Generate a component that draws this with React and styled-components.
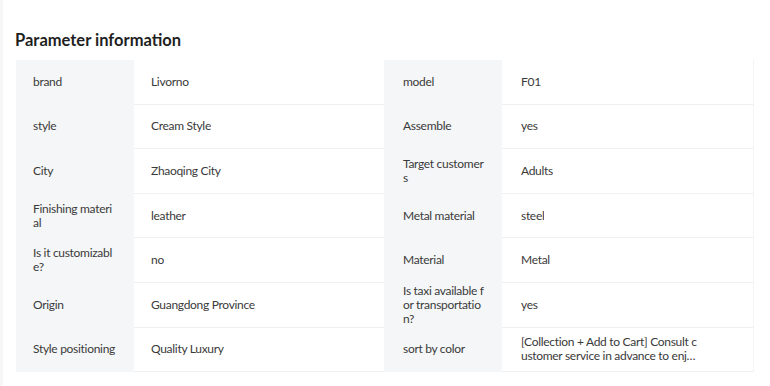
import styled, { createGlobalStyle } from "styled-components";

const Global = createGlobalStyle`
  html, body {
    margin: 0;
    padding: 0;
    background: #fff;
  }
  body {
    font-family: "Lato", "Noto Sans", sans-serif;
    color: #333;
  }
`;

const Page = styled.div`
  width: 770px;
  height: 386px;
  box-sizing: border-box;
  border-left: 3px solid #f7f7f8;
  padding: 29px 0 0 12px;
`;

const Title = styled.h3`
  margin: 0 0 9px;
  font-size: 16.5px;
  font-weight: 700;
  color: #1f1f1f;
  line-height: 22px;
`;

const Table = styled.div`
  display: grid;
  grid-template-columns: 118px 250px 118px 251px;
  width: 737px;
  margin-left: 1px;
  border-right: 1px solid #f3f4f5;
`;

const Cell = styled.div`
  box-sizing: border-box;
  height: 44.6px;
  display: flex;
  align-items: center;
  font-size: 12px;
  line-height: 14px;
  letter-spacing: -0.3px;
  color: #3a3a3a;
  padding: 0 18px 0 ${(p) => (p.$second ? "19px" : "17px")};
  word-break: break-all;
  background: ${(p) => (p.$label ? "#f5f6f8" : "#fff")};
  border-bottom: 1px solid ${(p) => (p.$label ? "#f5f6f8" : "#eef0f2")};
`;

const Value = styled.span`
  max-width: 178px;
  display: -webkit-box;
  -webkit-line-clamp: 2;
  -webkit-box-orient: vertical;
  overflow: hidden;
`;

const rows = [
  ["brand", "Livorno", "model", "F01"],
  ["style", "Cream Style", "Assemble", "yes"],
  ["City", "Zhaoqing City", "Target customers", "Adults"],
  ["Finishing material", "leather", "Metal material", "steel"],
  ["Is it customizable?", "no", "Material", "Metal"],
  ["Origin", "Guangdong Province", "Is taxi available for transportation?", "yes"],
  [
    "Style positioning",
    "Quality Luxury",
    "sort by color",
    "[Collection + Add to Cart] Consult customer service in advance to enjoy priority delivery",
  ],
];

export default function App() {
  return (
    <>
      <Global />
      <Page>
        <Title>Parameter information</Title>
        <Table>
          {rows.map((r, i) => [
            <Cell key={i + "a"} $label>{r[0]}</Cell>,
            <Cell key={i + "b"}>
              <Value>{r[1]}</Value>
            </Cell>,
            <Cell key={i + "c"} $label $second>{r[2]}</Cell>,
            <Cell key={i + "d"} $second>
              <Value>{r[3]}</Value>
            </Cell>,
          ])}
        </Table>
      </Page>
    </>
  );
}
